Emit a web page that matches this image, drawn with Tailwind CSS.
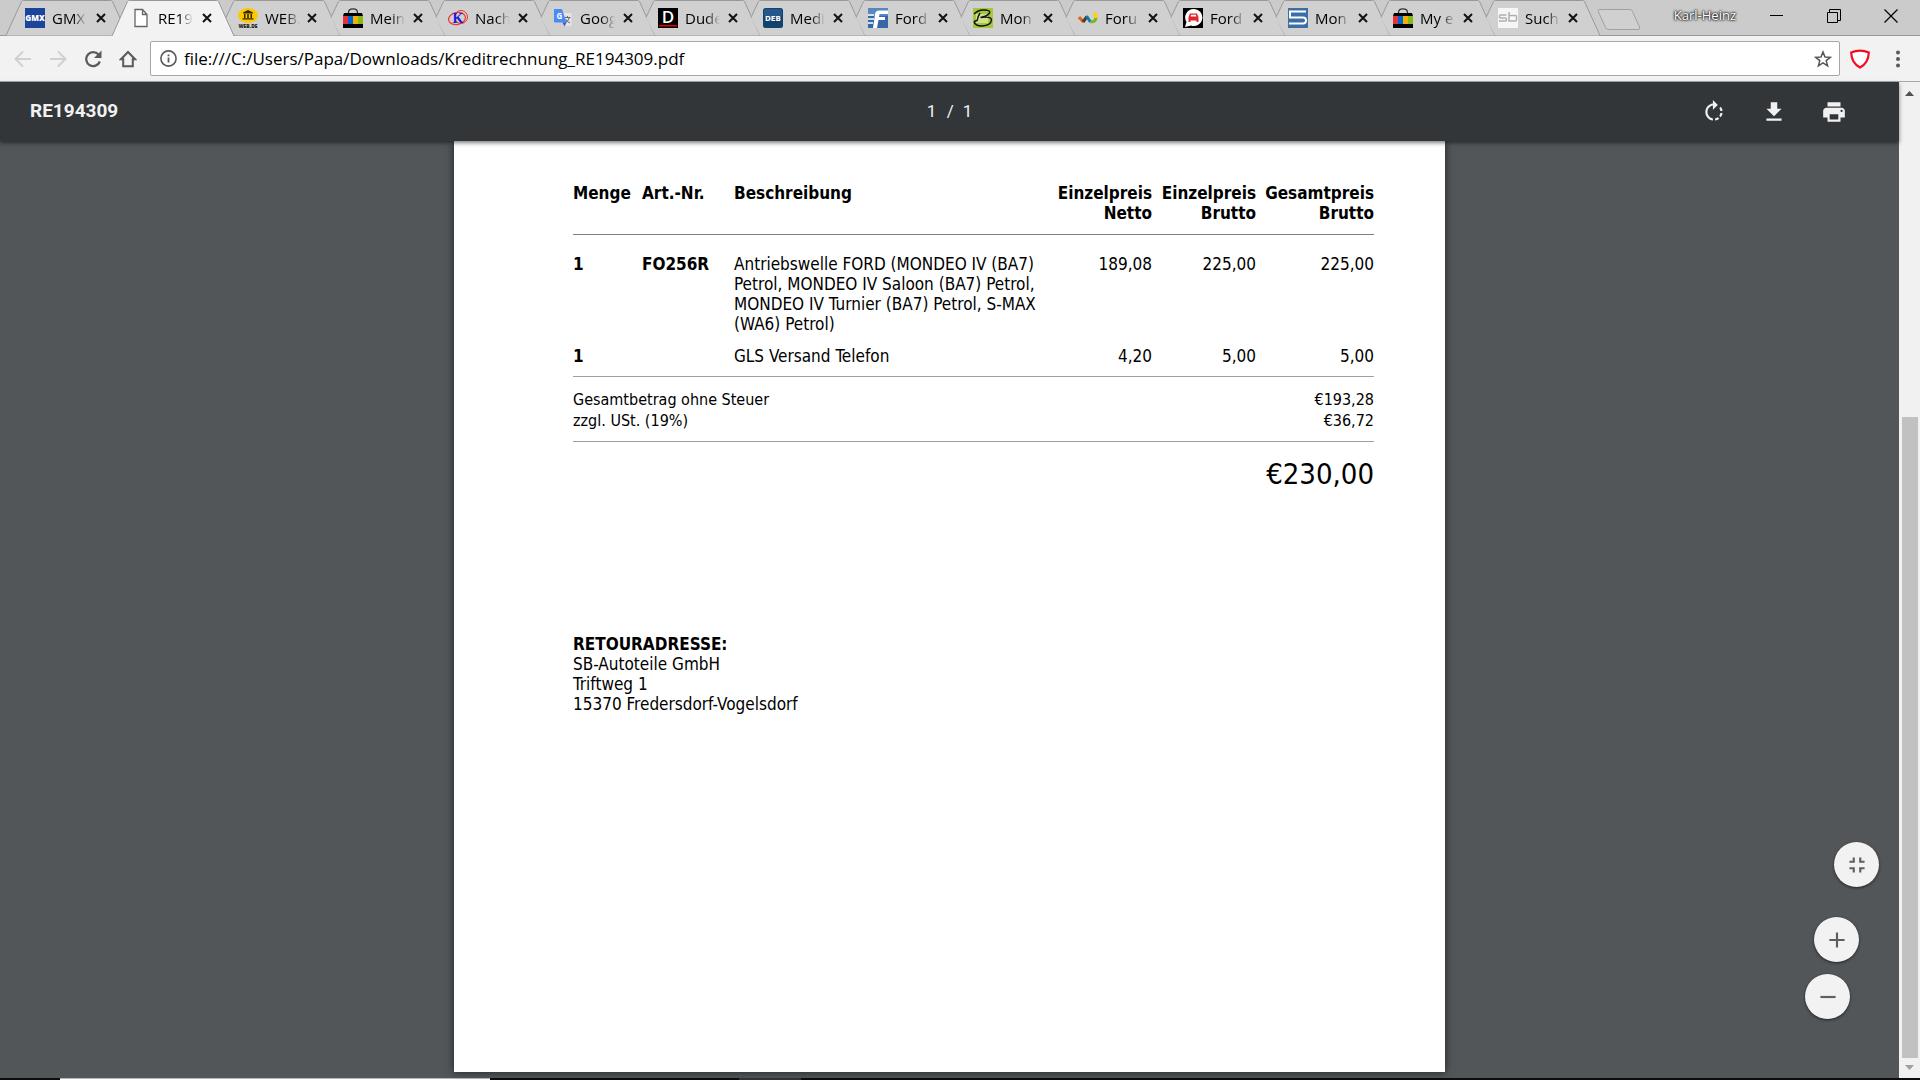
<!DOCTYPE html>
<html lang="de">
<head>
  <meta charset="UTF-8" />
  <meta name="viewport" content="width=device-width, initial-scale=1.0" />
  <title>RE194309</title>
  <script src="https://cdn.jsdelivr.net/npm/@tailwindcss/browser@4"></script>
</head>
<body class="flex flex-col h-screen overflow-hidden bg-[#525659] font-['Open_Sans',sans-serif] text-black">

  <!-- Shared shapes -->
  <svg class="hidden">
    <symbol id="tab" viewBox="0 0 124 36">
      <path d="M9 17.500 16.500 1.500Q17 .5 18.500 .5H105.500Q107 .5 107.500 1.500L123 35.500H18z" fill="#d0d0d0" />
      <path d="M9 17.500 16.500 1.500Q17 .5 18.500 .5H105.500Q107 .5 107.500 1.500L123 35.500" fill="none" stroke="#999" />
    </symbol>
    <symbol id="tab-first" viewBox="0 0 124 36">
      <path d="M1 35.500 16.500 1.500Q17 .5 18.500 .5H105.500Q107 .5 107.500 1.500L123 35.500" fill="#d0d0d0" stroke="#999" />
    </symbol>
    <symbol id="tab-active" viewBox="0 0 124 36">
      <path d="M1 36 16.500 1.500Q17 .5 18.500 .5H105.500Q107 .5 107.500 1.500L123 36" fill="#f2f2f2" stroke="#999" />
    </symbol>
    <symbol id="x" viewBox="0 0 10 10">
      <path d="M1 1 9 9M9 1 1 9" stroke="#111" stroke-width="2" fill="none" />
    </symbol>
    <symbol id="ebay" viewBox="0 0 20 20">
      <path d="M5.500 6V4.500Q5.500 .8 10 .8T14.500 4.500V6" fill="none" stroke="#333" stroke-width="1.300" />
      <path d="M1 5H19L20 8H0zM0 16H20V20H0z" fill="#000" />
      <path d="M0 8H5V16H0z" fill="#e53238" />
      <path d="M5 8H10V16H5z" fill="#0064d2" />
      <path d="M10 8H15V16H10z" fill="#f5af02" />
      <path d="M15 8H20V16H15z" fill="#86b817" />
    </symbol>
  </svg>

  <!-- Tab strip -->
  <header class="relative flex h-9 shrink-0 bg-[#cbcbcb] border-b border-[#999]">
    <div class="flex h-9 pl-[5px] text-[15px]">
      <div class="relative w-[106px] h-9">
        <svg class="absolute left-0 top-0 w-[124px] h-9"><use href="#tab-first" /></svg>
        <div class="relative flex items-center h-9 pl-5">
          <svg class="size-5" viewBox="0 0 20 20"><path d="M0 0H20V20H0z" fill="#1c449b" /><text x="10" y="13" font-family="Open Sans" font-size="8" font-weight="800" fill="#fff" text-anchor="middle">GMX</text></svg>
          <span class="w-[35px] ml-[7px] whitespace-nowrap mask-r-from-60%">GMX</span>
          <button class="ml-[9px]" aria-label="Schließen"><svg class="size-[10px]"><use href="#x" /></svg></button>
        </div>
      </div>
      <div class="relative z-10 w-[106px] h-9">
        <svg class="absolute left-0 top-0 w-[124px] h-9"><use href="#tab-active" /></svg>
        <div class="relative flex items-center h-9 pl-5">
          <svg class="size-5" viewBox="0 0 20 20"><path d="M4 1.500H11.500L16 6.500V18.500H4zM11.500 1.500V6.500H16" fill="#fff" stroke="#666" stroke-width="1.300" /></svg>
          <span class="w-[35px] ml-[7px] whitespace-nowrap mask-r-from-60%">RE19</span>
          <button class="ml-[9px]" aria-label="Schließen"><svg class="size-[10px]"><use href="#x" /></svg></button>
        </div>
      </div>
      <div class="relative w-[105px] h-9">
        <svg class="absolute left-0 top-0 w-[124px] h-9"><use href="#tab" /></svg>
        <div class="relative flex items-center h-9 pl-[21px]">
          <svg class="size-5" viewBox="0 0 20 20"><ellipse cx="10" cy="7.500" rx="10" ry="7.500" fill="#ffc800" /><path d="M5 4.500 10 2 15 4.500V5.500H5zM6 6H7.500V10H6zM9.200 6H10.800V10H9.200zM12.500 6H14V10H12.500zM4.500 10.300H15.500V11.500H4.500z" fill="#332800" /><text x="10" y="19.500" font-family="Open Sans" font-size="5" font-weight="800" fill="#222" text-anchor="middle">WEB.DE</text></svg>
          <span class="w-[35px] ml-[7px] whitespace-nowrap mask-r-from-60%">WEB.</span>
          <button class="ml-[7px]" aria-label="Schließen"><svg class="size-[10px]"><use href="#x" /></svg></button>
        </div>
      </div>
      <div class="relative w-[105px] h-9">
        <svg class="absolute left-0 top-0 w-[124px] h-9"><use href="#tab" /></svg>
        <div class="relative flex items-center h-9 pl-[21px]">
          <svg class="size-5"><use href="#ebay" /></svg>
          <span class="w-[35px] ml-[7px] whitespace-nowrap mask-r-from-60%">Mein</span>
          <button class="ml-2" aria-label="Schließen"><svg class="size-[10px]"><use href="#x" /></svg></button>
        </div>
      </div>
      <div class="relative w-[105px] h-9">
        <svg class="absolute left-0 top-0 w-[124px] h-9"><use href="#tab" /></svg>
        <div class="relative flex items-center h-9 pl-[21px]">
          <svg class="size-5" viewBox="0 0 20 20"><ellipse cx="9" cy="10.500" rx="8.500" ry="6" fill="none" stroke="#e33" stroke-width="1.200" transform="rotate(-12 9 10.500)" /><ellipse cx="13" cy="9" rx="6.500" ry="6.500" fill="none" stroke="#e33" /><text x="10" y="15" font-family="Liberation Serif" font-size="14" font-weight="bold" fill="#1a1ae0" text-anchor="middle">K</text></svg>
          <span class="w-[35px] ml-[7px] whitespace-nowrap mask-r-from-60%">Nach</span>
          <button class="ml-2" aria-label="Schließen"><svg class="size-[10px]"><use href="#x" /></svg></button>
        </div>
      </div>
      <div class="relative w-[105px] h-9">
        <svg class="absolute left-0 top-0 w-[124px] h-9"><use href="#tab" /></svg>
        <div class="relative flex items-center h-9 pl-[21px]">
          <svg class="size-5" viewBox="0 0 20 20"><path d="M9 5H18.500V18H12z" fill="#e4e4e4" /><path d="M11.500 9.500H17.500M14.500 8V9.500M16.500 9.500Q15.500 13 12 15M12.500 11Q14 14 17 15" stroke="#667" fill="none" /><path d="M1 1H9L13.500 14.500H2Q1 14.500 1 13.500z" fill="#4a8af4" /><path d="M9.500 14.500H13.500L11.500 18.500z" fill="#3355c8" /><text x="6.300" y="10.500" font-family="Open Sans" font-size="8" font-weight="700" fill="#fff" text-anchor="middle">G</text></svg>
          <span class="w-[35px] ml-[7px] whitespace-nowrap mask-r-from-60%">Goog</span>
          <button class="ml-2" aria-label="Schließen"><svg class="size-[10px]"><use href="#x" /></svg></button>
        </div>
      </div>
      <div class="relative w-[105px] h-9">
        <svg class="absolute left-0 top-0 w-[124px] h-9"><use href="#tab" /></svg>
        <div class="relative flex items-center h-9 pl-[21px]">
          <svg class="size-5" viewBox="0 0 20 20"><path d="M0 0H20V20H0z" /><path d="M1 17H19V18.500H1z" fill="#e00" /><text x="10" y="14.500" font-family="Open Sans" font-size="17" font-weight="600" fill="#fff" text-anchor="middle">D</text></svg>
          <span class="w-[35px] ml-[7px] whitespace-nowrap mask-r-from-60%">Dude</span>
          <button class="ml-2" aria-label="Schließen"><svg class="size-[10px]"><use href="#x" /></svg></button>
        </div>
      </div>
      <div class="relative w-[105px] h-9">
        <svg class="absolute left-0 top-0 w-[124px] h-9"><use href="#tab" /></svg>
        <div class="relative flex items-center h-9 pl-[21px]">
          <svg class="size-5" viewBox="0 0 20 20"><rect width="20" height="20" rx="2.500" fill="#14426e" /><rect x="1" y="1" width="18" height="8" rx="2" fill="#26578a" /><text x="10" y="12.500" font-family="DejaVu Sans" font-size="7" font-weight="bold" fill="#fff" text-anchor="middle">DEB</text></svg>
          <span class="w-[35px] ml-[7px] whitespace-nowrap mask-r-from-60%">Medi</span>
          <button class="ml-2" aria-label="Schließen"><svg class="size-[10px]"><use href="#x" /></svg></button>
        </div>
      </div>
      <div class="relative w-[105px] h-9">
        <svg class="absolute left-0 top-0 w-[124px] h-9"><use href="#tab" /></svg>
        <div class="relative flex items-center h-9 pl-[21px]">
          <svg class="size-5" viewBox="0 0 20 20"><path d="M0 0H20V20H0z" fill="#3668a8" /><path d="M0 0H20V8H0z" fill="#5886be" /><path d="M20 2.500H11Q7.500 2.500 7 6L5 20H9L10.500 12H17V9H11L11.500 6H20z" fill="#fff" /><path d="M0 7H6M0 11H6M0 15H5" stroke="#fff" stroke-width="1.500" /></svg>
          <span class="w-[35px] ml-[7px] whitespace-nowrap mask-r-from-60%">Ford</span>
          <button class="ml-2" aria-label="Schließen"><svg class="size-[10px]"><use href="#x" /></svg></button>
        </div>
      </div>
      <div class="relative w-[105px] h-9">
        <svg class="absolute left-0 top-0 w-[124px] h-9"><use href="#tab" /></svg>
        <div class="relative flex items-center h-9 pl-[21px]">
          <svg class="size-5" viewBox="0 0 20 20"><path d="M0 0H20V20H0z" fill="#a4c73c" /><path d="M3 6H15V15H3z" fill="#cfe08f" /><path d="M1 6Q5 1.500 12 2Q18 2.500 16.500 5Q14 8.500 7.500 9.500Q18.500 8 18.500 12Q18 17.500 9 18Q2 18 1 13.500M7 5Q5 8 4 13M1 13.500 4 12.500" fill="none" stroke="#111" stroke-width="1.400" /></svg>
          <span class="w-[35px] ml-[7px] whitespace-nowrap mask-r-from-60%">Mon</span>
          <button class="ml-2" aria-label="Schließen"><svg class="size-[10px]"><use href="#x" /></svg></button>
        </div>
      </div>
      <div class="relative w-[105px] h-9">
        <svg class="absolute left-0 top-0 w-[124px] h-9"><use href="#tab" /></svg>
        <div class="relative flex items-center h-9 pl-[21px]">
          <svg class="size-5" viewBox="0 0 20 20" fill="none" stroke-width="3"><path d="M1 9 5.500 14" stroke="#e65f1d" /><path d="M5 14 9 8.500" stroke="#4a3a30" /><path d="M8.500 8 12.500 14" stroke="#1678a8" /><path d="M12.500 14Q18 14 18 9" stroke="#7fb51f" /><path d="M18 10Q18 6 15.500 5" stroke="#ffd200" /></svg>
          <span class="w-[35px] ml-[7px] whitespace-nowrap mask-r-from-60%">Foru</span>
          <button class="ml-2" aria-label="Schließen"><svg class="size-[10px]"><use href="#x" /></svg></button>
        </div>
      </div>
      <div class="relative w-[105px] h-9">
        <svg class="absolute left-0 top-0 w-[124px] h-9"><use href="#tab" /></svg>
        <div class="relative flex items-center h-9 pl-[21px]">
          <svg class="size-5" viewBox="0 0 20 20"><path d="M0 0H20V20H0z" /><path d="M10.500 1A8.500 8.500 0 1 1 8 17.500L2 19 3.500 14A8.500 8.500 0 0 1 10.500 1z" fill="#fff" /><path d="M5.500 9 7 5.500H14L15.500 9V14H13.500V12.500H7.500V14H5.500z" fill="#e2242c" /><path d="M7.500 8.500 8.200 6.700H12.800L13.500 8.500z" fill="#fff" /></svg>
          <span class="w-[35px] ml-[7px] whitespace-nowrap mask-r-from-60%">Ford</span>
          <button class="ml-2" aria-label="Schließen"><svg class="size-[10px]"><use href="#x" /></svg></button>
        </div>
      </div>
      <div class="relative w-[105px] h-9">
        <svg class="absolute left-0 top-0 w-[124px] h-9"><use href="#tab" /></svg>
        <div class="relative flex items-center h-9 pl-[21px]">
          <svg class="size-5" viewBox="0 0 20 20"><path d="M0 0H20V20H0z" fill="#3a6ea5" /><path d="M18 3.500H2V9.500H15Q18 9.500 18 12.500T15 15.500H1" fill="none" stroke="#fff" stroke-width="2" /></svg>
          <span class="w-[35px] ml-[7px] whitespace-nowrap mask-r-from-60%">Mon</span>
          <button class="ml-2" aria-label="Schließen"><svg class="size-[10px]"><use href="#x" /></svg></button>
        </div>
      </div>
      <div class="relative w-[105px] h-9">
        <svg class="absolute left-0 top-0 w-[124px] h-9"><use href="#tab" /></svg>
        <div class="relative flex items-center h-9 pl-[21px]">
          <svg class="size-5"><use href="#ebay" /></svg>
          <span class="w-[35px] ml-[7px] whitespace-nowrap mask-r-from-60%">My e</span>
          <button class="ml-2" aria-label="Schließen"><svg class="size-[10px]"><use href="#x" /></svg></button>
        </div>
      </div>
      <div class="relative w-[105px] h-9">
        <svg class="absolute left-0 top-0 w-[124px] h-9"><use href="#tab" /></svg>
        <div class="relative flex items-center h-9 pl-[21px]">
          <svg class="size-5" viewBox="0 0 20 20"><path d="M0 0H20V20H0z" fill="#f6f6f6" /><path d="M8.500 7H2.500Q1.500 7 1.500 8.500T2.500 10H7.500Q8.500 10 8.500 11.500T7.500 13H1M11 4V13H17.500Q18.500 13 18.500 11.500V8.500Q18.500 7.500 17.500 7.500H11" fill="none" stroke="#b0b0b0" stroke-width="1.500" /></svg>
          <span class="w-[35px] ml-[7px] whitespace-nowrap mask-r-from-60%">Such</span>
          <button class="ml-2" aria-label="Schließen"><svg class="size-[10px]"><use href="#x" /></svg></button>
        </div>
      </div>
      <button class="ml-[15px] self-start mt-2" aria-label="Neuer Tab">
        <svg class="w-[45px] h-[23px]" viewBox="0 0 45 23"><path d="M2 1.500H33Q34.500 1.500 35.500 3.500L42.500 19Q43.500 21.500 41.500 21.500H11.500Q9.500 21.500 8.500 19.500L1.500 4Q.7 1.500 2 1.500z" fill="#d0d0d0" stroke="#a0a0a0" /></svg>
      </button>
    </div>
    <div class="flex ml-auto h-8 items-center pr-px">
      <span class="mr-3 text-[13px] font-medium text-white [text-shadow:0_0_2px_#000,0_0_2px_#333,0_0_3px_#333]">Karl-Heinz</span>
      <button class="w-[57px] h-8 grid place-items-center" aria-label="Minimieren"><svg class="size-[14px]" viewBox="0 0 14 14"><path d="M0 6.500H13" stroke="#000" /></svg></button>
      <button class="w-[57px] h-8 grid place-items-center" aria-label="Verkleinern"><svg class="size-[14px]" viewBox="0 0 14 14" fill="none" stroke="#000"><path d="M.5 3.500H10.500V13.500H.5zM2.500 3.500V.5H13.500V11.500H10.500" /></svg></button>
      <button class="w-[57px] h-8 grid place-items-center" aria-label="Fenster schließen"><svg class="size-[14px]" viewBox="0 0 14 14"><path d="M.5 .5 13.500 13.500M13.500 .5 .5 13.500" stroke="#000" stroke-width="1.200" /></svg></button>
    </div>
  </header>

  <!-- Address bar -->
  <nav class="flex items-center h-[46px] shrink-0 bg-[#f2f2f2] border-b border-[#a8a8a8] pl-3">
    <button class="w-[35px] pl-0.5" aria-label="Zurück"><svg class="size-[18px]" viewBox="0 0 18 18" fill="none" stroke="#d0d0d0" stroke-width="2"><path d="M17 9H2M9 1.500 1.500 9 9 16.500" /></svg></button>
    <button class="w-[35px] pl-0.5" aria-label="Vorwärts"><svg class="size-[18px]" viewBox="0 0 18 18" fill="none" stroke="#d0d0d0" stroke-width="2"><path d="M1 9H16M9 1.500 16.500 9 9 16.500" /></svg></button>
    <button class="w-[35px] pl-0.5" aria-label="Neu laden"><svg class="size-[18px]" viewBox="0 0 18 18"><path d="M14.500 4.500A7 7 0 1 0 15.800 11.500" fill="none" stroke="#5a5a5a" stroke-width="2.300" /><path d="M17.500 .5V8H10z" fill="#5a5a5a" /></svg></button>
    <button class="w-[33px] pl-0.5" aria-label="Startseite"><svg class="size-[18px]" viewBox="0 0 18 18"><path d="M9 2 2 9.200H4.200V16.200H13.800V9.200H16z" fill="none" stroke="#5a5a5a" stroke-width="2" /></svg></button>
    <div class="flex flex-1 items-center h-[35px] bg-white border border-[#a6a6a6] rounded-xs pl-[9px] pr-[7px]">
      <svg class="size-[17px] shrink-0" viewBox="0 0 17 17"><circle cx="8.500" cy="8.500" r="7.600" fill="none" stroke="#5a5a5a" stroke-width="1.600" /><path d="M7.600 7.500H9.400V12.500H7.600zM7.600 4.500H9.400V6.200H7.600z" fill="#5a5a5a" /></svg>
      <input type="text" aria-label="Adresse" value="file:///C:/Users/Papa/Downloads/Kreditrechnung_RE194309.pdf" class="flex-1 ml-[7px] text-[17px] leading-6 outline-none" />
      <button aria-label="Lesezeichen"><svg class="size-[18px]" viewBox="0 0 18 18"><path d="M9 2 11 7 16.300 7.300 12.200 10.600 13.600 15.800 9 12.900 4.400 15.800 5.800 10.600 1.700 7.300 7 7z" fill="none" stroke="#555" stroke-width="1.500" /></svg></button>
    </div>
    <button class="ml-[10px]" aria-label="Erweiterung"><svg class="size-5" viewBox="0 0 20 20"><path d="M1.200 3.500Q10 -.2 18.800 3.500Q18.500 14 10 18.500Q1.500 14 1.200 3.500z" fill="#fff" stroke="#f50a1e" stroke-width="2.200" /></svg></button>
    <button class="ml-[26px] mr-5" aria-label="Menü"><svg class="w-1 h-[18px]" viewBox="0 0 4 18" fill="#5a5a5a"><circle cx="2" cy="2.500" r="2" /><circle cx="2" cy="9" r="2" /><circle cx="2" cy="15.500" r="2" /></svg></button>
  </nav>

  <!-- PDF viewer -->
  <div class="flex flex-1 min-h-0">
    <div class="relative flex flex-col flex-1 min-w-0">
      <div class="relative z-10 grid grid-cols-3 items-center h-[59px] shrink-0 bg-[#323639] px-[30px] text-[#f1f1f1] font-[Roboto,sans-serif] shadow-[0_2px_4px_rgba(0,0,0,0.5)]">
        <h1 class="text-[19px] font-bold">RE194309</h1>
        <div class="flex justify-center text-[17px] gap-[9px]">
          <input type="text" value="1" aria-label="Seite" class="w-[11px] outline-none" />
          <span>/</span>
          <span>1</span>
        </div>
        <div class="flex justify-end gap-[34px] pr-[22px]">
          <button aria-label="Drehen"><svg class="size-[26px]" viewBox="0 0 24 24" fill="currentColor"><path d="M15.550 5.550 11 1V4.070C7.060 4.560 4 7.920 4 12S7.050 19.440 11 19.930V17.910C8.160 17.430 6 14.970 6 12S8.160 6.570 11 6.090V10L15.550 5.550zM19.930 11C19.760 9.610 19.210 8.270 18.310 7.110L16.890 8.530C17.430 9.280 17.770 10.130 17.910 11H19.930zM13 17.900V19.920C14.390 19.750 15.740 19.210 16.900 18.310L15.460 16.870C14.710 17.410 13.870 17.760 13 17.900zM16.890 15.480 18.310 16.890C19.210 15.730 19.760 14.390 19.930 13H17.910C17.770 13.870 17.430 14.720 16.890 15.480z" /></svg></button>
          <button aria-label="Herunterladen"><svg class="size-[26px]" viewBox="0 0 24 24" fill="currentColor"><path d="M19 9H15V3H9V9H5L12 16 19 9zM5 18V20H19V18H5z" /></svg></button>
          <button aria-label="Drucken"><svg class="size-[26px]" viewBox="0 0 24 24" fill="currentColor"><path d="M19 8H5C3.340 8 2 9.340 2 11V17H6V21H18V17H22V11C22 9.340 20.660 8 19 8zM16 19H8V14H16V19zM19 12C18.450 12 18 11.550 18 11S18.450 10 19 10 20 10.450 20 11 19.550 12 19 12zM18 3H6V7H18V3z" /></svg></button>
        </div>
      </div>

      <!-- Invoice page -->
      <main class="flex-1 min-h-0 flex justify-center pb-[6px]">
        <article class="w-[991px] bg-white pl-[119px] pr-[71px] pt-[42px] shadow-[0_0_8px_rgba(0,0,0,0.6)] font-['DejaVu_Sans_Condensed','DejaVu_Sans',sans-serif] text-[17px] leading-5">
          <table class="w-full table-fixed">
            <colgroup>
              <col class="w-[69px]" /><col class="w-[92px]" /><col /><col class="w-[104px]" /><col class="w-[104px]" /><col class="w-[118px]" />
            </colgroup>
            <thead>
              <tr class="align-top border-b border-[#808080] text-left">
                <th class="pb-[11px]">Menge</th>
                <th class="pb-[11px]">Art.-Nr.</th>
                <th class="pb-[11px]">Beschreibung</th>
                <th class="pb-[11px] text-right">Einzelpreis<br />Netto</th>
                <th class="pb-[11px] text-right">Einzelpreis<br />Brutto</th>
                <th class="pb-[11px] text-right">Gesamtpreis<br />Brutto</th>
              </tr>
            </thead>
            <tbody class="border-b border-[#a0a0a0]">
              <tr class="align-top">
                <td class="pt-[19px] font-bold">1</td>
                <td class="pt-[19px] font-bold">FO256R</td>
                <td class="pt-[19px] whitespace-nowrap">Antriebswelle FORD (MONDEO IV (BA7)<br />Petrol, MONDEO IV Saloon (BA7) Petrol,<br />MONDEO IV Turnier (BA7) Petrol, S-MAX<br />(WA6) Petrol)</td>
                <td class="pt-[19px] text-right">189,08</td>
                <td class="pt-[19px] text-right">225,00</td>
                <td class="pt-[19px] text-right">225,00</td>
              </tr>
              <tr class="align-top">
                <td class="pt-3 pb-[10px] font-bold">1</td>
                <td></td>
                <td class="pt-3">GLS Versand Telefon</td>
                <td class="pt-3 text-right">4,20</td>
                <td class="pt-3 text-right">5,00</td>
                <td class="pt-3 text-right">5,00</td>
              </tr>
            </tbody>
          </table>
          <dl class="grid grid-cols-2 pt-3 pb-[10px] border-b border-[#a0a0a0] text-[16px] leading-[21px]">
            <dt>Gesamtbetrag ohne Steuer</dt><dd class="text-right">€193,28</dd>
            <dt>zzgl. USt. (19%)</dt><dd class="text-right">€36,72</dd>
          </dl>
          <p class="mt-3 text-right text-[29px] leading-10">€230,00</p>
          <address class="mt-[140px] not-italic">
            <strong>RETOURADRESSE:</strong><br />
            SB-Autoteile GmbH<br />
            Triftweg 1<br />
            15370 Fredersdorf-Vogelsdorf
          </address>
        </article>
      </main>

      <!-- Zoom buttons -->
      <div class="absolute right-5 bottom-[59px] z-10 flex flex-col items-end text-[#5f5f5f]">
        <button class="size-[45px] grid place-items-center rounded-full bg-[#f2f2f2] shadow-[0_1px_3px_rgba(0,0,0,0.6)]" aria-label="An Seite anpassen"><svg class="size-[26px]" viewBox="0 0 24 24" fill="currentColor"><path d="M5 16H8V19H10V14H5V16zM8 8H5V10H10V5H8V8zM14 19H16V16H19V14H14V19zM16 8V5H14V10H19V8H16z" /></svg></button>
        <button class="mt-[30px] mr-5 size-[45px] grid place-items-center rounded-full bg-[#f2f2f2] shadow-[0_1px_3px_rgba(0,0,0,0.6)]" aria-label="Vergrößern"><svg class="size-[26px]" viewBox="0 0 24 24" fill="currentColor"><path d="M19 13H13V19H11V13H5V11H11V5H13V11H19V13z" /></svg></button>
        <button class="mt-3 mr-[29px] size-[45px] grid place-items-center rounded-full bg-[#f2f2f2] shadow-[0_1px_3px_rgba(0,0,0,0.6)]" aria-label="Verkleinern"><svg class="size-[26px]" viewBox="0 0 24 24" fill="currentColor"><path d="M19 13H5V11H19V13z" /></svg></button>
      </div>
    </div>

    <!-- Scrollbar -->
    <div class="flex flex-col items-center w-[21px] shrink-0 bg-[#f1f1f1]">
      <svg class="w-[9px] h-[5px] mt-[9px]" viewBox="0 0 9 5"><path d="M0 5 4.500 0 9 5z" fill="#505050" /></svg>
      <div class="grow-[321]"></div>
      <div class="grow-[641] w-4 bg-[#c1c1c1]"></div>
      <svg class="w-[9px] h-[5px] mt-[7px] mb-2" viewBox="0 0 9 5"><path d="M0 0 4.500 5 9 0z" fill="#a0a0a0" /></svg>
    </div>
  </div>

  <!-- Taskbar edge -->
  <footer class="flex h-0.5 shrink-0 bg-[#0c0c0e]">
    <div class="ml-[60px] w-[430px] bg-white border-t border-[#b8b8b8]"></div>
    <div class="ml-[249px] w-[62px] bg-[#333]"></div>
  </footer>

</body>
</html>
